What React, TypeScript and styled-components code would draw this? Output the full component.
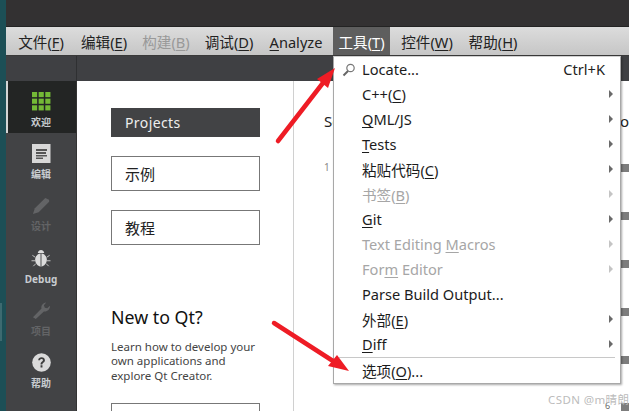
import React from 'react';
import styled, { createGlobalStyle } from 'styled-components';

const Global = createGlobalStyle`
  html, body { margin: 0; padding: 0; background: #fff; }
  body { font-family: "Noto Sans", "Noto Sans CJK SC", sans-serif; overflow: hidden; }
`;
const CJK = '"Noto Sans", "Noto Sans CJK SC", sans-serif';

const Page = styled.div`
  position: relative; width: 629px; height: 411px; overflow: hidden;
  display: flex; background: #fff; font-family: ${CJK};
`;
const DesktopStrip = styled.div`
  width: 6px; flex: none; background: #1c4f56; position: relative;
`;
const StripTab = styled.div`
  position: absolute; left: 0; top: 303px; width: 2px; height: 38px; background: #3d6a70;
`;
const Win = styled.div`display: flex; flex-direction: column; flex: 1; min-width: 0; overflow: hidden;`;
const TitleBar = styled.div`height: 26px; background: #333132; border-bottom: 1px solid #232323; flex: none;`;
const MenuBar = styled.div`
  height: 28px; flex: none; display: flex; align-items: stretch; padding-left: 1px;
  background: linear-gradient(#dcdcdc, #c6c6c6); border-bottom: 1px solid #3a3a3a;
`;
const MenuItem = styled.div<{ $w: number; $off?: boolean; $open?: boolean }>`
  width: ${p => p.$w}px; flex: none; display: flex; align-items: center; justify-content: center;
  font-size: 14.6px; padding-top: 1px; white-space: nowrap;
  color: ${p => (p.$open ? '#fff' : p.$off ? '#999' : '#222')};
  background: ${p => (p.$open ? '#5e5e5e' : 'transparent')};
`;
const U = styled.span`text-decoration: underline; text-underline-offset: 2px; text-decoration-thickness: 1px;`;
const ToolRow = styled.div`height: 25px; flex: none; display: flex; background: #3f4043;`;
const ToolLeft = styled.div`width: 70px; border-right: 1px solid #2f3032; flex: none;`;
const Body = styled.div`flex: 1; display: flex; min-height: 0;`;
const Side = styled.div`
  width: 70px; flex: none; background: #424345; border-right: 1px solid #333;
  display: flex; flex-direction: column;
`;
const SideBtn = styled.div<{ $active?: boolean; $off?: boolean }>`
  height: 52.2px; flex: none; display: flex; flex-direction: column;
  align-items: center; justify-content: flex-start; padding-top: 11px; box-sizing: border-box; gap: 4px;
  background: ${p => (p.$active ? '#232524' : 'transparent')};
  box-shadow: ${p => (p.$active ? 'inset 2px 0 0 #d5d5d5' : 'none')};
  font-size: 10px; font-weight: 700; line-height: 14px;
  color: ${p => (p.$off ? '#636466' : '#c8ccd0')};
`;
const Main = styled.div`flex: 1; display: flex; min-width: 0;`;
const LeftCol = styled.div`
  width: 217px; flex: none; border-right: 1px solid #d0d0d0; padding: 27px 0 0 34px;
  box-sizing: border-box; display: flex; flex-direction: column;
`;
const ProjectsBtn = styled.div`
  width: 149px; height: 29px; flex: none; background: #424345; color: #eee; font-size: 14px; letter-spacing: 0.4px;
  display: flex; align-items: center; padding-left: 14px; box-sizing: border-box;
`;
const OutlineBtn = styled.div`
  width: 149px; height: 35px; flex: none; border: 1px solid #777; color: #222; font-size: 15px;
  display: flex; align-items: center; padding-left: 13px; box-sizing: border-box; margin-top: 19px;
`;
const NewTitle = styled.div`font-size: 17.8px; color: #111; margin-top: 60px; line-height: 24px; flex: none;`;
const NewText = styled.div`font-size: 11.5px; color: #444; line-height: 14.4px; margin-top: 11px; width: 150px; white-space: nowrap; flex: none;`;
const GetStarted = styled(OutlineBtn)`margin-top: 20px;`;
const RightCol = styled.div`
  flex: 1; position: relative; padding: 30px 0 0 30px; display: flex; flex-direction: column;
  font-size: 15px; color: #222; min-width: 0;
`;
const Sessions = styled.div`line-height: 20px;`;
const SessionNo = styled.div`font-size: 10px; color: #888; margin-top: 30px; line-height: 12px;`;
const EdgeText = styled.div`position: absolute; left: 326px; top: 30px; font-size: 15px; line-height: 20px; color: #222;`;
const Square = styled.div<{ $top: number }>`
  position: absolute; right: 0; top: ${p => p.$top}px; width: 8px; height: 8px; background: #7d7d7d;
`;
const SmallNo = styled.div`position: absolute; left: 311px; top: 320px; font-size: 9px; line-height: 10px; color: #666;`;

const Menu = styled.div`
  position: absolute; left: 333px; top: 56px; width: 288px; height: 328px; box-sizing: border-box;
  background: #fff; border: 1px solid #a8a8a8; border-top-color: #d0d0d0;
  box-shadow: 1px 1px 2px rgba(0,0,0,.35); display: flex; flex-direction: column; z-index: 2;
`;
const Row = styled.div<{ $off?: boolean; $h?: number }>`
  height: ${p => p.$h ?? 25}px; flex: none; display: flex; align-items: center; position: relative;
  box-sizing: border-box; padding: 0 12px 1px 28px; font-size: 14.6px; white-space: nowrap;
  color: ${p => (p.$off ? '#a6a6a6' : '#1c1c1c')};
`;
const Label = styled.span`flex: 1;`;
const Arrow = styled.span<{ $off?: boolean }>`
  width: 0; height: 0; border-left: 4px solid ${p => (p.$off ? '#c4c4c4' : '#6a6a6a')};
  border-top: 4px solid transparent; border-bottom: 4px solid transparent; margin-right: -5px;
`;
const Shortcut = styled.span`margin-right: 3px; color: #222;`;
const RowIcon = styled.svg`position: absolute; left: 8px; top: 6px;`;
const Sep = styled.div`height: 1px; background: #c8c8c8; margin: 0 5px; flex: none;`;
const Arrows = styled.svg`position: absolute; left: 0; top: 0; z-index: 3; pointer-events: none;`;
const Mark = styled.div`
  position: absolute; left: 548px; top: 392px; font-size: 11.5px; line-height: 16px; color: #bcbcbc; z-index: 4;
  letter-spacing: .4px; white-space: nowrap;
`;

const items: { t: React.ReactNode; off?: boolean; arrow?: boolean }[] = [
  { t: <>C++(<U>C</U>)</>, arrow: true },
  { t: <><U>Q</U>ML/JS</>, arrow: true },
  { t: <><U>T</U>ests</>, arrow: true },
  { t: <>粘贴代码(<U>C</U>)</>, arrow: true },
  { t: <>书签(<U>B</U>)</>, arrow: true, off: true },
  { t: <><U>G</U>it</>, arrow: true },
  { t: <>Text Editing <U>M</U>acros</>, arrow: true, off: true },
  { t: <>For<U>m</U> Editor</>, arrow: true, off: true },
  { t: <>Parse Build Output...</> },
  { t: <>外部(<U>E</U>)</>, arrow: true },
  { t: <><U>D</U>iff</>, arrow: true },
];

const Grid = () => (
  <svg width="19" height="19" viewBox="0 0 20 20">
    {[0, 7, 14].flatMap(y => [0, 7, 14].map(x => <rect key={`${x}-${y}`} x={x} y={y} width="5.4" height="5.4" fill="#74b936" />))}
  </svg>
);
const EditIcon = () => (
  <svg width="19" height="19" viewBox="0 0 19 19">
    <rect width="18.500" height="19" fill="#d8d8d8" />
    <path d="M4 5h11v2H4zM4 8h10v2H4zM4 11h11v1.500H4zM4 13.500h7V15H4z" fill="#555" />
  </svg>
);
const PenIcon = () => (
  <svg width="19" height="19" viewBox="0 0 20 20">
    <path d="M1 19l2-6L14 2l4 2 0 2L7 17z" fill="#636466" />
  </svg>
);
const BugIcon = () => (
  <svg width="20" height="19" viewBox="0 0 21 21" fill="none">
    <path d="M10 5C6.500 5.500 4 8 4 12c0 4 3 7 6 7.500zM11 5c3.500.5 6 3 6 7 0 4-3 7-6 7.500z" fill="#dcdcdc" />
    <path d="M7 4.500C7 2.500 8.500 1 10.500 1S14 2.500 14 4.500z" fill="#dcdcdc" />
    <path d="M1 7l3 2M20 7l-3 2M0 13h4M21 13h-4M2 19l3-3M19 19l-3-3" stroke="#cfcfcf" strokeWidth="1" />
  </svg>
);
const WrenchIcon = () => (
  <svg width="19" height="19" viewBox="0 0 20 20">
    <path d="M1 17l9-9c-.6-3 1-6 5-6.500L12.500 4.500l1 2.500 2.500.5 3-2.500c0 4-3 6.500-6.500 6L4 19z" fill="#636466" />
  </svg>
);
const HelpIcon = () => (
  <svg width="19" height="19" viewBox="0 0 20 20">
    <circle cx="10" cy="10" r="9.800" fill="#dadada" />
    <path d="M6.500 7.500C6.700 5.500 8.200 4.500 10 4.500c2.200 0 3.600 1.300 3.600 3 0 2.500-2.700 2.500-2.700 4.500H9c0-3 2.500-3 2.500-4.500 0-.8-.6-1.300-1.500-1.300-1 0-1.500.6-1.600 1.500zM9 13h2v2.200H9z" fill="#3d3d3d" />
  </svg>
);

export default function App() {
  return (
    <Page>
      <Global />
      <DesktopStrip><StripTab /></DesktopStrip>
      <Win>
        <TitleBar />
        <MenuBar>
          <MenuItem $w={68}>文件(<U>F</U>)</MenuItem>
          <MenuItem $w={58}>编辑(<U>E</U>)</MenuItem>
          <MenuItem $w={66} $off>构建(<U>B</U>)</MenuItem>
          <MenuItem $w={60}>调试(<U>D</U>)</MenuItem>
          <MenuItem $w={74}><span><U>A</U>nalyze</span></MenuItem>
          <MenuItem $w={57} $open>工具(<U>T</U>)</MenuItem>
          <MenuItem $w={74}>控件(<U>W</U>)</MenuItem>
          <MenuItem $w={58}>帮助(<U>H</U>)</MenuItem>
        </MenuBar>
        <ToolRow><ToolLeft /></ToolRow>
        <Body>
          <Side>
            <SideBtn $active><Grid />欢迎</SideBtn>
            <SideBtn><EditIcon />编辑</SideBtn>
            <SideBtn $off><PenIcon />设计</SideBtn>
            <SideBtn><BugIcon />Debug</SideBtn>
            <SideBtn $off><WrenchIcon />项目</SideBtn>
            <SideBtn><HelpIcon />帮助</SideBtn>
          </Side>
          <Main>
            <LeftCol>
              <ProjectsBtn>Projects</ProjectsBtn>
              <OutlineBtn>示例</OutlineBtn>
              <OutlineBtn>教程</OutlineBtn>
              <NewTitle>New to Qt?</NewTitle>
              <NewText>Learn how to develop your<br />own applications and<br />explore Qt Creator.</NewText>
              <GetStarted />
            </LeftCol>
            <RightCol>
              <Sessions>Sessions</Sessions>
              <SessionNo>1</SessionNo>
              <EdgeText>op</EdgeText>
              <SmallNo>6</SmallNo>
              {[83, 131, 179, 227, 275, 322].map(t => <Square key={t} $top={t} />)}
            </RightCol>
          </Main>
        </Body>
      </Win>

      <Menu>
        <Row>
          <RowIcon width="14" height="14" viewBox="0 0 14 14" fill="none">
            <circle cx="8.500" cy="5" r="3.700" stroke="#777" strokeWidth="1.200" />
            <path d="M6 8L1.500 12.500" stroke="#666" strokeWidth="2" />
          </RowIcon>
          <Label>Locate...</Label><Shortcut>Ctrl+K</Shortcut>
        </Row>
        {items.map((it, i) => (
          <Row key={i} $off={it.off}>
            <Label>{it.t}</Label>
            {it.arrow && <Arrow $off={it.off} />}
          </Row>
        ))}
        <Sep />
        <Row $h={26}><Label>选项(<U>O</U>)...</Label></Row>
      </Menu>

      <Arrows width="629" height="411" viewBox="0 0 629 411" fill="none">
        <path d="M278 141L326 79" stroke="#ee1c25" strokeWidth="4.500" strokeLinecap="round" />
        <path d="M335 68L317 79 328 88z" fill="#ee1c25" />
        <path d="M274 323L333 361" stroke="#ee1c25" strokeWidth="4.500" strokeLinecap="round" />
        <path d="M349 371L337 355 328 366z" fill="#ee1c25" />
      </Arrows>
      <Mark>CSDN @m晴朗</Mark>
    </Page>
  );
}
